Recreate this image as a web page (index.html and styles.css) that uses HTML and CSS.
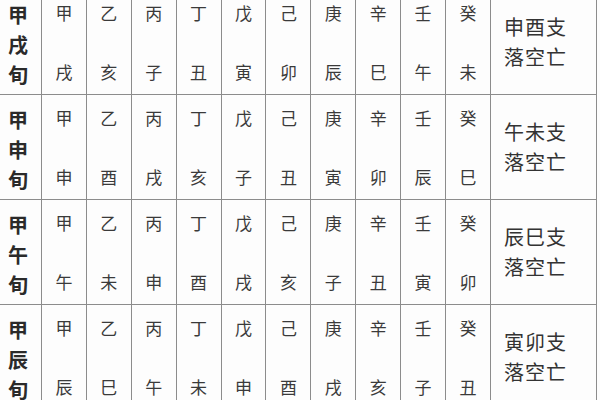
FILE: index.html
```html
<!DOCTYPE html>
<html lang="zh">
<head>
<meta charset="utf-8">
<link rel="stylesheet" href="styles.css">
</head>
<body>
<div class="table">
  <div class="row">
    <div class="head"><span>甲</span><span>戌</span><span>旬</span></div>
    <div class="cell"><span>甲</span><span>戌</span></div>
    <div class="cell"><span>乙</span><span>亥</span></div>
    <div class="cell"><span>丙</span><span>子</span></div>
    <div class="cell"><span>丁</span><span>丑</span></div>
    <div class="cell"><span>戊</span><span>寅</span></div>
    <div class="cell"><span>己</span><span>卯</span></div>
    <div class="cell"><span>庚</span><span>辰</span></div>
    <div class="cell"><span>辛</span><span>巳</span></div>
    <div class="cell"><span>壬</span><span>午</span></div>
    <div class="cell"><span>癸</span><span>未</span></div>
    <div class="note"><span>申酉支</span><span>落空亡</span></div>
  </div>
  <div class="row">
    <div class="head"><span>甲</span><span>申</span><span>旬</span></div>
    <div class="cell"><span>甲</span><span>申</span></div>
    <div class="cell"><span>乙</span><span>酉</span></div>
    <div class="cell"><span>丙</span><span>戌</span></div>
    <div class="cell"><span>丁</span><span>亥</span></div>
    <div class="cell"><span>戊</span><span>子</span></div>
    <div class="cell"><span>己</span><span>丑</span></div>
    <div class="cell"><span>庚</span><span>寅</span></div>
    <div class="cell"><span>辛</span><span>卯</span></div>
    <div class="cell"><span>壬</span><span>辰</span></div>
    <div class="cell"><span>癸</span><span>巳</span></div>
    <div class="note"><span>午未支</span><span>落空亡</span></div>
  </div>
  <div class="row">
    <div class="head"><span>甲</span><span>午</span><span>旬</span></div>
    <div class="cell"><span>甲</span><span>午</span></div>
    <div class="cell"><span>乙</span><span>未</span></div>
    <div class="cell"><span>丙</span><span>申</span></div>
    <div class="cell"><span>丁</span><span>酉</span></div>
    <div class="cell"><span>戊</span><span>戌</span></div>
    <div class="cell"><span>己</span><span>亥</span></div>
    <div class="cell"><span>庚</span><span>子</span></div>
    <div class="cell"><span>辛</span><span>丑</span></div>
    <div class="cell"><span>壬</span><span>寅</span></div>
    <div class="cell"><span>癸</span><span>卯</span></div>
    <div class="note"><span>辰巳支</span><span>落空亡</span></div>
  </div>
  <div class="row">
    <div class="head"><span>甲</span><span>辰</span><span>旬</span></div>
    <div class="cell"><span>甲</span><span>辰</span></div>
    <div class="cell"><span>乙</span><span>巳</span></div>
    <div class="cell"><span>丙</span><span>午</span></div>
    <div class="cell"><span>丁</span><span>未</span></div>
    <div class="cell"><span>戊</span><span>申</span></div>
    <div class="cell"><span>己</span><span>酉</span></div>
    <div class="cell"><span>庚</span><span>戌</span></div>
    <div class="cell"><span>辛</span><span>亥</span></div>
    <div class="cell"><span>壬</span><span>子</span></div>
    <div class="cell"><span>癸</span><span>丑</span></div>
    <div class="note"><span>寅卯支</span><span>落空亡</span></div>
  </div>
</div>
</body>
</html>
```
FILE: styles.css
```css
html, body {
  margin: 0;
  padding: 0;
  background: #fdfdfd;
  overflow: hidden;
}
body {
  width: 600px;
  height: 400px;
  font-family: "Noto Sans CJK SC", "Noto Sans CJK JP", sans-serif;
}
.table {
  margin-top: -10px;
  width: 597px;
}
.row {
  display: grid;
  grid-template-columns: 42px repeat(10, 44.9px) 106px;
  height: 105px;
  border-bottom: 1.5px solid #8c8c8c;
  box-sizing: border-box;
}
.row > div {
  border-right: 1.5px solid #8c8c8c;
  box-sizing: border-box;
}
.head {
  display: flex;
  flex-direction: column;
  align-items: center;
  justify-content: center;
  padding: 6px 5px 0 0;
  font-size: 20px;
  line-height: 30px;
  font-weight: 700;
  color: #2a2a2a;
}
.cell {
  display: flex;
  flex-direction: column;
  align-items: center;
  justify-content: space-between;
  padding: 13px 0 12px;
  font-size: 17px;
  line-height: 20px;
  color: #3a3a3a;
}
.note {
  display: flex;
  flex-direction: column;
  justify-content: center;
  padding-left: 13px;
  font-size: 20px;
  line-height: 30px;
  color: #333;
  letter-spacing: 1px;
}
```
